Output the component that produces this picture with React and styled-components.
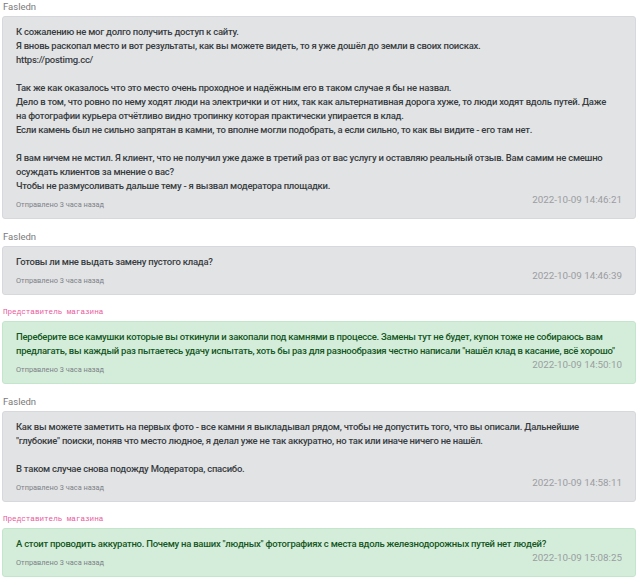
import React from "react";
import styled, { createGlobalStyle } from "styled-components";

const GlobalStyle = createGlobalStyle`
  html, body { margin: 0; padding: 0; background: #ffffff; }
  body { font-family: Roboto, "Noto Sans", sans-serif; }
`;

const Feed = styled.div`
  display: flex;
  flex-direction: column;
  gap: 12px;
  padding: 1px 4px 0 2px;
`;

const Message = styled.div`
  display: flex;
  flex-direction: column;
`;

const Author = styled.div`
  font-size: 9.5px;
  line-height: 12px;
  color: #7a7a7a;
  padding-left: 1px;
  margin-bottom: 3px;
`;

const ShopAuthor = styled.code`
  font-family: "Liberation Mono", "Courier New", monospace;
  font-size: 7.6px;
  line-height: 11px;
  color: #e8589a;
  padding-left: 1px;
  margin-bottom: 3px;
`;

const Card = styled.div`
  border-radius: 3px;
  border: 1px solid ${(p) => (p.$shop ? "#c3e6cb" : "#d6d8db")};
  background: ${(p) => (p.$shop ? "#d4edda" : "#e2e3e5")};
  color: ${(p) => (p.$shop ? "#155724" : "#383d41")};
  padding: 8px 13px 8px 13px;
`;

const Body = styled.div`
  font-size: 9.5px;
  font-weight: 500;
  letter-spacing: -0.25px;
  line-height: 14px;
`;

const Line = styled.div`
  white-space: nowrap;
  min-height: 14px;
`;

const Footer = styled.div`
  display: flex;
  justify-content: space-between;
  align-items: flex-start;
`;

const Sent = styled.div`
  margin-top: 7px;
  font-size: 7.4px;
  line-height: 10px;
  color: #7d8287;
`;

const Stamp = styled.div`
  font-size: 9.8px;
  line-height: 13px;
  color: #9a9da1;
`;

const messages = [
  {
    shop: false,
    time: "2022-10-09 14:46:21",
    lines: [
      "К сожалению не мог долго получить доступ к сайту.",
      "Я вновь раскопал место и вот результаты, как вы можете видеть, то я уже дошёл до земли в своих поисках.",
      "https://postimg.cc/",
      "",
      "Так же как оказалось что это место очень проходное и надёжным его в таком случае я бы не назвал.",
      "Дело в том, что ровно по нему ходят люди на электрички и от них, так как альтернативная дорога хуже, то люди ходят вдоль путей. Даже",
      "на фотографии курьера отчётливо видно тропинку которая практически упирается в клад.",
      "Если камень был не сильно запрятан в камни, то вполне могли подобрать, а если сильно, то как вы видите - его там нет.",
      "",
      "Я вам ничем не мстил. Я клиент, что не получил уже даже в третий раз от вас услугу и оставляю реальный отзыв. Вам самим не смешно",
      "осуждать клиентов за мнение о вас?",
      "Чтобы не размусоливать дальше тему - я вызвал модератора площадки.",
    ],
  },
  {
    shop: false,
    time: "2022-10-09 14:46:39",
    lines: ["Готовы ли мне выдать замену пустого клада?"],
  },
  {
    shop: true,
    time: "2022-10-09 14:50:10",
    lines: [
      "Переберите все камушки которые вы откинули и закопали под камнями в процессе. Замены тут не будет, купон тоже не собираюсь вам",
      "предлагать, вы каждый раз пытаетесь удачу испытать, хоть бы раз для разнообразия честно написали \"нашёл клад в касание, всё хорошо\"",
    ],
  },
  {
    shop: false,
    time: "2022-10-09 14:58:11",
    lines: [
      "Как вы можете заметить на первых фото - все камни я выкладывал рядом, чтобы не допустить того, что вы описали. Дальнейшие",
      "\"глубокие\" поиски, поняв что место людное, я делал уже не так аккуратно, но так или иначе ничего не нашёл.",
      "",
      "В таком случае снова подожду Модератора, спасибо.",
    ],
  },
  {
    shop: true,
    time: "2022-10-09 15:08:25",
    lines: [
      "А стоит проводить аккуратно. Почему на ваших \"людных\" фотографиях с места вдоль железнодорожных путей нет людей?",
    ],
  },
];

export default function App() {
  return (
    <>
      <GlobalStyle />
      <Feed>
        {messages.map((m, i) => (
          <Message key={i}>
            {m.shop ? <ShopAuthor>Представитель магазина</ShopAuthor> : <Author>Fasledn</Author>}
            <Card $shop={m.shop}>
              <Body>
                {m.lines.map((l, j) => (
                  <Line key={j}>{l}</Line>
                ))}
              </Body>
              <Footer>
                <Sent>Отправлено 3 часа назад</Sent>
                <Stamp>{m.time}</Stamp>
              </Footer>
            </Card>
          </Message>
        ))}
      </Feed>
    </>
  );
}
